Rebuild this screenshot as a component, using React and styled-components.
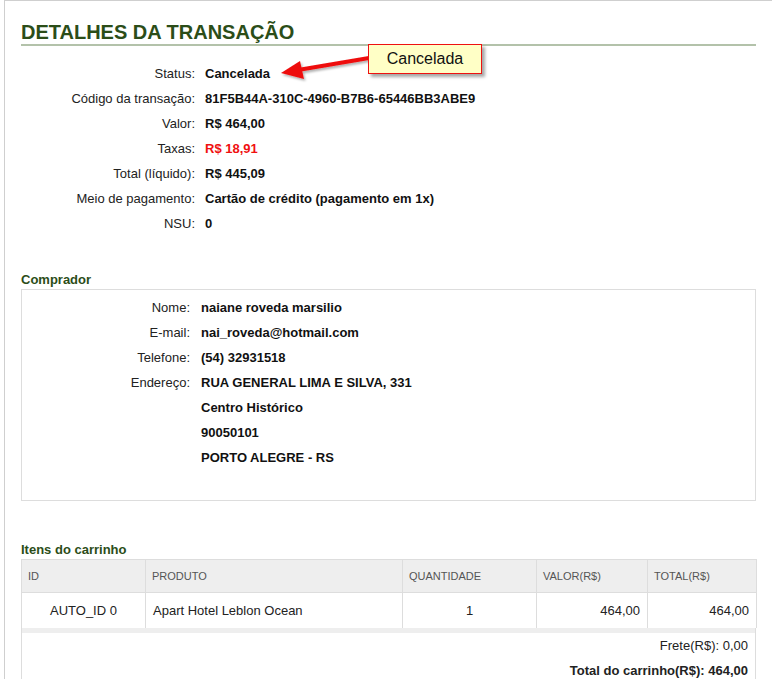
import React from 'react';
import styled, { createGlobalStyle } from 'styled-components';

const GlobalStyle = createGlobalStyle`
    html, body {
        margin: 0;
        padding: 0;
        background: #fff;
        overflow: hidden;
    }
    body {
        font-family: "Liberation Sans", Arial, sans-serif;
        font-size: 13px;
        color: #222;
    }
`;

const Frame = styled.div`
    position: relative;
    margin-left: 4px;
    width: 800px;
    min-height: 679px;
    border-top: 1px solid #cfcfcf;
    border-left: 1px solid #cfcfcf;
    padding: 19px 0 0 16px;
    box-sizing: border-box;
`;

const Content = styled.div`
    width: 735px;
`;

const Title = styled.h1`
    margin: 0;
    font-size: 20px;
    line-height: 24px;
    font-weight: bold;
    color: #2b4d18;
    border-bottom: 2px solid #b3c2aa;
`;

const InfoGrid = styled.div`
    display: grid;
    grid-template-columns: ${({ labelWidth }) => labelWidth}px 1fr;
    column-gap: ${({ gap }) => gap}px;
    line-height: 25px;
    margin-top: ${({ top }) => top || 0}px;
`;

const Label = styled.div`
    text-align: right;
    color: #222;
    white-space: nowrap;
`;

const Value = styled.div`
    font-weight: bold;
    color: ${({ danger }) => (danger ? '#f01010' : '#111')};
    white-space: nowrap;
`;

const SectionTitle = styled.h2`
    margin: ${({ top }) => top}px 0 ${({ bottom }) => bottom}px;
    font-size: 13px;
    line-height: 18px;
    font-weight: bold;
    color: #2b4d18;
`;

const Panel = styled.div`
    border: 1px solid #dddddd;
    padding: 5px 0 30px;
`;

const Table = styled.table`
    width: 735px;
    border-collapse: collapse;
    table-layout: fixed;
`;

const Th = styled.th`
    background: #eeeeee;
    border: 1px solid #dddddd;
    height: 32px;
    padding: 0 6px;
    font-size: 11px;
    font-weight: normal;
    color: #555;
    text-align: left;
`;

const Td = styled.td`
    border: 1px solid #dddddd;
    border-bottom: none;
    height: 35px;
    padding: 0 7px;
    font-size: 13px;
    color: #222;
    text-align: ${({ align }) => align || 'left'};
`;

const Strip = styled.div`
    height: 5px;
    background: #eeeeee;
    border-left: 1px solid #dddddd;
    border-right: 1px solid #dddddd;
`;

const Summary = styled.div`
    border-left: 1px solid #dddddd;
    border-right: 1px solid #dddddd;
    padding: 0 7px;
    text-align: right;
    line-height: 25px;
    height: 60px;
`;

const SummaryLine = styled.div`
    font-weight: ${({ strong }) => (strong ? 'bold' : 'normal')};
    color: #222;
`;

const Callout = styled.div`
    position: absolute;
    left: 363px;
    top: 43px;
    width: 112px;
    height: 28px;
    background: #ffffc6;
    border: 1px solid #ee1111;
    box-shadow: 3px 3px 3px rgba(0, 0, 0, 0.35);
    font-size: 16px;
    line-height: 28px;
    text-align: center;
    color: #111;
`;

const Arrow = styled.svg`
    position: absolute;
    left: 271px;
    top: 48px;
    overflow: visible;
`;

const columns = [124, 257, 134, 111, 109];

export default function App() {
    const details = [
        ['Status:', 'Cancelada'],
        ['Código da transação:', '81F5B44A-310C-4960-B7B6-65446BB3ABE9'],
        ['Valor:', 'R$ 464,00'],
        ['Taxas:', 'R$ 18,91', true],
        ['Total (líquido):', 'R$ 445,09'],
        ['Meio de pagamento:', 'Cartão de crédito (pagamento em 1x)'],
        ['NSU:', '0'],
    ];

    const buyer = [
        ['Nome:', 'naiane roveda marsilio'],
        ['E-mail:', 'nai_roveda@hotmail.com'],
        ['Telefone:', '(54) 32931518'],
    ];

    const address = ['RUA GENERAL LIMA E SILVA, 331', 'Centro Histórico', '90050101', 'PORTO ALEGRE - RS'];

    return (
        <>
            <GlobalStyle />
            <Frame>
                <Content>
                    <Title>DETALHES DA TRANSAÇÃO</Title>

                    <InfoGrid labelWidth={174} gap={10} top={15}>
                        {details.map(([label, value, danger]) => (
                            <React.Fragment key={label}>
                                <Label>{label}</Label>
                                <Value danger={danger}>{value}</Value>
                            </React.Fragment>
                        ))}
                    </InfoGrid>

                    <SectionTitle top={35} bottom={0}>Comprador</SectionTitle>
                    <Panel>
                        <InfoGrid labelWidth={168} gap={11}>
                            {buyer.map(([label, value]) => (
                                <React.Fragment key={label}>
                                    <Label>{label}</Label>
                                    <Value>{value}</Value>
                                </React.Fragment>
                            ))}
                            {address.map((line, i) => (
                                <React.Fragment key={line}>
                                    <Label>{i === 0 ? 'Endereço:' : ''}</Label>
                                    <Value>{line}</Value>
                                </React.Fragment>
                            ))}
                        </InfoGrid>
                    </Panel>

                    <SectionTitle top={40} bottom={0}>Itens do carrinho</SectionTitle>
                    <Table>
                        <colgroup>
                            {columns.map((w, i) => <col key={i} style={{ width: w }} />)}
                        </colgroup>
                        <thead>
                            <tr>
                                <Th>ID</Th>
                                <Th>PRODUTO</Th>
                                <Th>QUANTIDADE</Th>
                                <Th>VALOR(R$)</Th>
                                <Th>TOTAL(R$)</Th>
                            </tr>
                        </thead>
                        <tbody>
                            <tr>
                                <Td align="center">AUTO_ID 0</Td>
                                <Td>Apart Hotel Leblon Ocean</Td>
                                <Td align="center">1</Td>
                                <Td align="right">464,00</Td>
                                <Td align="right">464,00</Td>
                            </tr>
                        </tbody>
                    </Table>
                    <Strip />
                    <Summary>
                        <SummaryLine>Frete(R$): 0,00</SummaryLine>
                        <SummaryLine strong>Total do carrinho(R$): 464,00</SummaryLine>
                    </Summary>
                </Content>

                <Arrow width="100" height="30" viewBox="0 0 100 30">
                    <defs>
                        <filter id="arrowShadow" x="-20%" y="-50%" width="140%" height="200%">
                            <feDropShadow dx="1.5" dy="2" stdDeviation="1" floodColor="#000" floodOpacity="0.3" />
                        </filter>
                    </defs>
                    <g filter="url(#arrowShadow)">
                        <line x1="93" y1="9" x2="22" y2="21" stroke="#ee1111" strokeWidth="4" />
                        <polygon points="5,24 24,12 28,30" fill="#ee1111" />
                    </g>
                </Arrow>
                <Callout>Cancelada</Callout>
            </Frame>
        </>
    );
}
